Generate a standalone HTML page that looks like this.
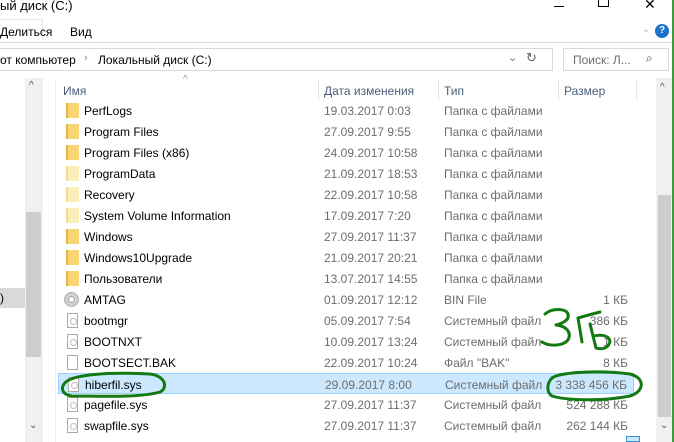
<!DOCTYPE html>
<html><head><meta charset="utf-8"><style>
*{margin:0;padding:0;box-sizing:border-box}
body{width:674px;height:442px;overflow:hidden;background:#fff;font-family:"Liberation Sans","DejaVu Sans",sans-serif;font-size:12px;color:#000;position:relative}
.a{position:absolute;white-space:nowrap}
.g{color:#6d6d6d}
.row{position:absolute;left:58px;width:576px;height:21px}
.row span{position:absolute;top:4px;white-space:nowrap}
.n{left:26px;color:#000}
.d{left:266px;color:#6d6d6d}
.t{left:386px;color:#6d6d6d}
.s{right:6px;color:#6d6d6d}
.fold{position:absolute;left:8px;top:3px;width:13px;height:15px;background:#f8d675;border-left:2px solid #e6b53f}
.fold.l{background:#fbeeb8;border-left-color:#f2dc92}
.file{position:absolute;left:9px;top:3px;width:11px;height:15px;border:1px solid #a9a9a9;background:#fff}
.file.sys:after{content:"";position:absolute;left:2px;top:4px;width:5px;height:5px;border:1px solid #bdbdbd;border-radius:50%}
.cd{position:absolute;left:6px;top:3px;width:15px;height:15px;border-radius:50%;background:radial-gradient(circle,#fff 2px,#999 3px,#ddd 4px,#bbb 7px,#888 8px)}
</style></head><body>
<!-- title -->
<div class="a" style="left:0;top:-2px;font-size:13px">ый диск (C:)</div>
<div class="a" style="left:554px;top:6px;width:10px;height:1px;background:#000"></div>
<div class="a" style="left:598px;top:-2px;width:11px;height:9px;border:1px solid #000;border-top:none"></div>
<div class="a" style="left:644px;top:-4px;font-size:14px">✕</div>
<!-- ribbon -->
<div class="a" style="left:0;top:19px;width:43px;height:24px;border:1px solid #e5e5e5;border-left:none;border-bottom:none;background:#fff"></div>
<div class="a" style="left:0;top:25px">Делиться</div>
<div class="a" style="left:70px;top:25px">Вид</div>
<div class="a" style="left:642px;top:24px;color:#bbb;font-size:10px">⌄</div>
<div class="a" style="left:655px;top:24px;width:14px;height:14px;border-radius:50%;background:#1a73c9;color:#fff;font-size:10px;font-weight:bold;text-align:center;line-height:14px">?</div>
<div class="a" style="left:0;top:42px;width:674px;height:1px;background:#dadbdc"></div>
<!-- address -->
<div class="a" style="left:-2px;top:48px;width:555px;height:23px;border:1px solid #d9d9d9"></div>
<div class="a" style="left:0;top:53px">от компьютер</div>
<div class="a" style="left:84px;top:52px;color:#888;font-size:11px">›</div>
<div class="a" style="left:98px;top:53px">Локальный диск (C:)</div>
<div class="a" style="left:508px;top:51px;color:#777;font-size:11px">⌄</div>
<div class="a" style="left:526px;top:50px;color:#666;font-size:13px">↻</div>
<div class="a" style="left:563px;top:48px;width:106px;height:23px;border:1px solid #d9d9d9"></div>
<div class="a" style="left:573px;top:53px;color:#6d6d6d">Поиск: Л...</div>
<div class="a" style="left:646px;top:51px;color:#444;font-size:12px">⌕</div>
<!-- nav pane -->
<div class="a" style="left:25px;top:78px;width:18px;height:364px;background:#f0f0f0"></div>
<div class="a" style="left:26px;top:212px;width:15px;height:145px;background:#cdcdcd"></div>
<div class="a" style="left:29px;top:80px;color:#555;font-size:10px">^</div>
<div class="a" style="left:29px;top:420px;color:#555;font-size:10px">⌄</div>
<div class="a" style="left:0;top:288px;width:25px;height:20px;background:#d9d9d9"></div>
<div class="a" style="left:0;top:291px">)</div>
<div class="a" style="left:55px;top:78px;width:1px;height:364px;background:#f0f0f0"></div>
<!-- header -->
<div class="a" style="left:183px;top:74px;color:#999;font-size:10px">^</div>
<div class="a g" style="left:63px;top:84px;color:#4c607a">Имя</div>
<div class="a" style="left:318px;top:80px;width:1px;height:20px;background:#e5e5e5"></div>
<div class="a" style="left:324px;top:84px;color:#4c607a">Дата изменения</div>
<div class="a" style="left:438px;top:80px;width:1px;height:20px;background:#e5e5e5"></div>
<div class="a" style="left:444px;top:84px;color:#4c607a">Тип</div>
<div class="a" style="left:558px;top:80px;width:1px;height:20px;background:#e5e5e5"></div>
<div class="a" style="left:564px;top:84px;color:#4c607a">Размер</div>
<div class="a" style="left:636px;top:80px;width:1px;height:20px;background:#e5e5e5"></div>
<!-- right scrollbar -->
<div class="a" style="left:656px;top:78px;width:17px;height:364px;background:#f0f0f0"></div>
<div class="a" style="left:658px;top:195px;width:13px;height:222px;background:#cdcdcd"></div>
<div class="a" style="left:660px;top:82px;color:#555;font-size:10px">^</div>
<div class="a" style="left:660px;top:420px;color:#555;font-size:10px">⌄</div>
<div class="a" style="left:672px;top:0;width:2px;height:442px;background:#3c9a3c"></div>
<div class="a" style="left:626px;top:436px;width:14px;height:6px;border:1px solid #3b8ed8;background:#cce8ff"></div>
<!-- rows -->
<div class="row" style="top:100px"><i class="fold"></i><span class="n">PerfLogs</span><span class="d">19.03.2017 0:03</span><span class="t">Папка с файлами</span></div>
<div class="row" style="top:121px"><i class="fold"></i><span class="n">Program Files</span><span class="d">27.09.2017 9:55</span><span class="t">Папка с файлами</span></div>
<div class="row" style="top:142px"><i class="fold"></i><span class="n">Program Files (x86)</span><span class="d">24.09.2017 10:58</span><span class="t">Папка с файлами</span></div>
<div class="row" style="top:163px"><i class="fold l"></i><span class="n">ProgramData</span><span class="d">21.09.2017 18:53</span><span class="t">Папка с файлами</span></div>
<div class="row" style="top:184px"><i class="fold l"></i><span class="n">Recovery</span><span class="d">22.09.2017 10:58</span><span class="t">Папка с файлами</span></div>
<div class="row" style="top:205px"><i class="fold l"></i><span class="n">System Volume Information</span><span class="d">17.09.2017 7:20</span><span class="t">Папка с файлами</span></div>
<div class="row" style="top:226px"><i class="fold"></i><span class="n">Windows</span><span class="d">27.09.2017 11:37</span><span class="t">Папка с файлами</span></div>
<div class="row" style="top:247px"><i class="fold"></i><span class="n">Windows10Upgrade</span><span class="d">21.09.2017 20:21</span><span class="t">Папка с файлами</span></div>
<div class="row" style="top:268px"><i class="fold"></i><span class="n">Пользователи</span><span class="d">13.07.2017 14:55</span><span class="t">Папка с файлами</span></div>
<div class="row" style="top:289px"><i class="cd"></i><span class="n">AMTAG</span><span class="d">01.09.2017 12:12</span><span class="t">BIN File</span><span class="s">1 КБ</span></div>
<div class="row" style="top:310px"><i class="file sys"></i><span class="n">bootmgr</span><span class="d">05.09.2017 7:54</span><span class="t">Системный файл</span><span class="s">386 КБ</span></div>
<div class="row" style="top:331px"><i class="file sys"></i><span class="n">BOOTNXT</span><span class="d">10.09.2017 13:24</span><span class="t">Системный файл</span><span class="s">1 КБ</span></div>
<div class="row" style="top:352px"><i class="file"></i><span class="n">BOOTSECT.BAK</span><span class="d">22.09.2017 10:24</span><span class="t">Файл "BAK"</span><span class="s">8 КБ</span></div>
<div class="row" style="top:373px;background:#cce8ff;border:1px solid #99d1ff"><i class="file sys"></i><span class="n">hiberfil.sys</span><span class="d">29.09.2017 8:00</span><span class="t">Системный файл</span><span class="s">3 338 456 КБ</span></div>
<div class="row" style="top:394px"><i class="file sys"></i><span class="n">pagefile.sys</span><span class="d">27.09.2017 11:37</span><span class="t">Системный файл</span><span class="s">524 288 КБ</span></div>
<div class="row" style="top:415px"><i class="file sys"></i><span class="n">swapfile.sys</span><span class="d">27.09.2017 11:37</span><span class="t">Системный файл</span><span class="s">262 144 КБ</span></div>
<!-- green annotations -->
<svg class="a" style="left:0;top:0" width="674" height="442" viewBox="0 0 674 442" fill="none" stroke="#137a13" stroke-width="3" stroke-linecap="round" stroke-linejoin="round">
<path d="M64 384 C70 374 110 372 150 374 C166 376 168 388 160 392 C140 398 100 396 72 396 C64 395 60 390 64 384"/>
<path d="M552 378 C560 372 600 370 630 374 C646 378 644 392 630 396 C600 402 565 400 552 396 C546 392 547 383 552 378"/>
<path d="M545 314 C552 308 566 308 568 314 C570 321 560 324 556 325 C566 326 572 332 568 340 C562 347 548 346 542 342"/>
<path d="M578 318 L582 342 M578 318 C585 316 592 314 600 312"/>
<path d="M590 324 L596 348 C602 350 608 348 610 342 C610 336 602 334 594 336"/>
</svg>
</body></html>
